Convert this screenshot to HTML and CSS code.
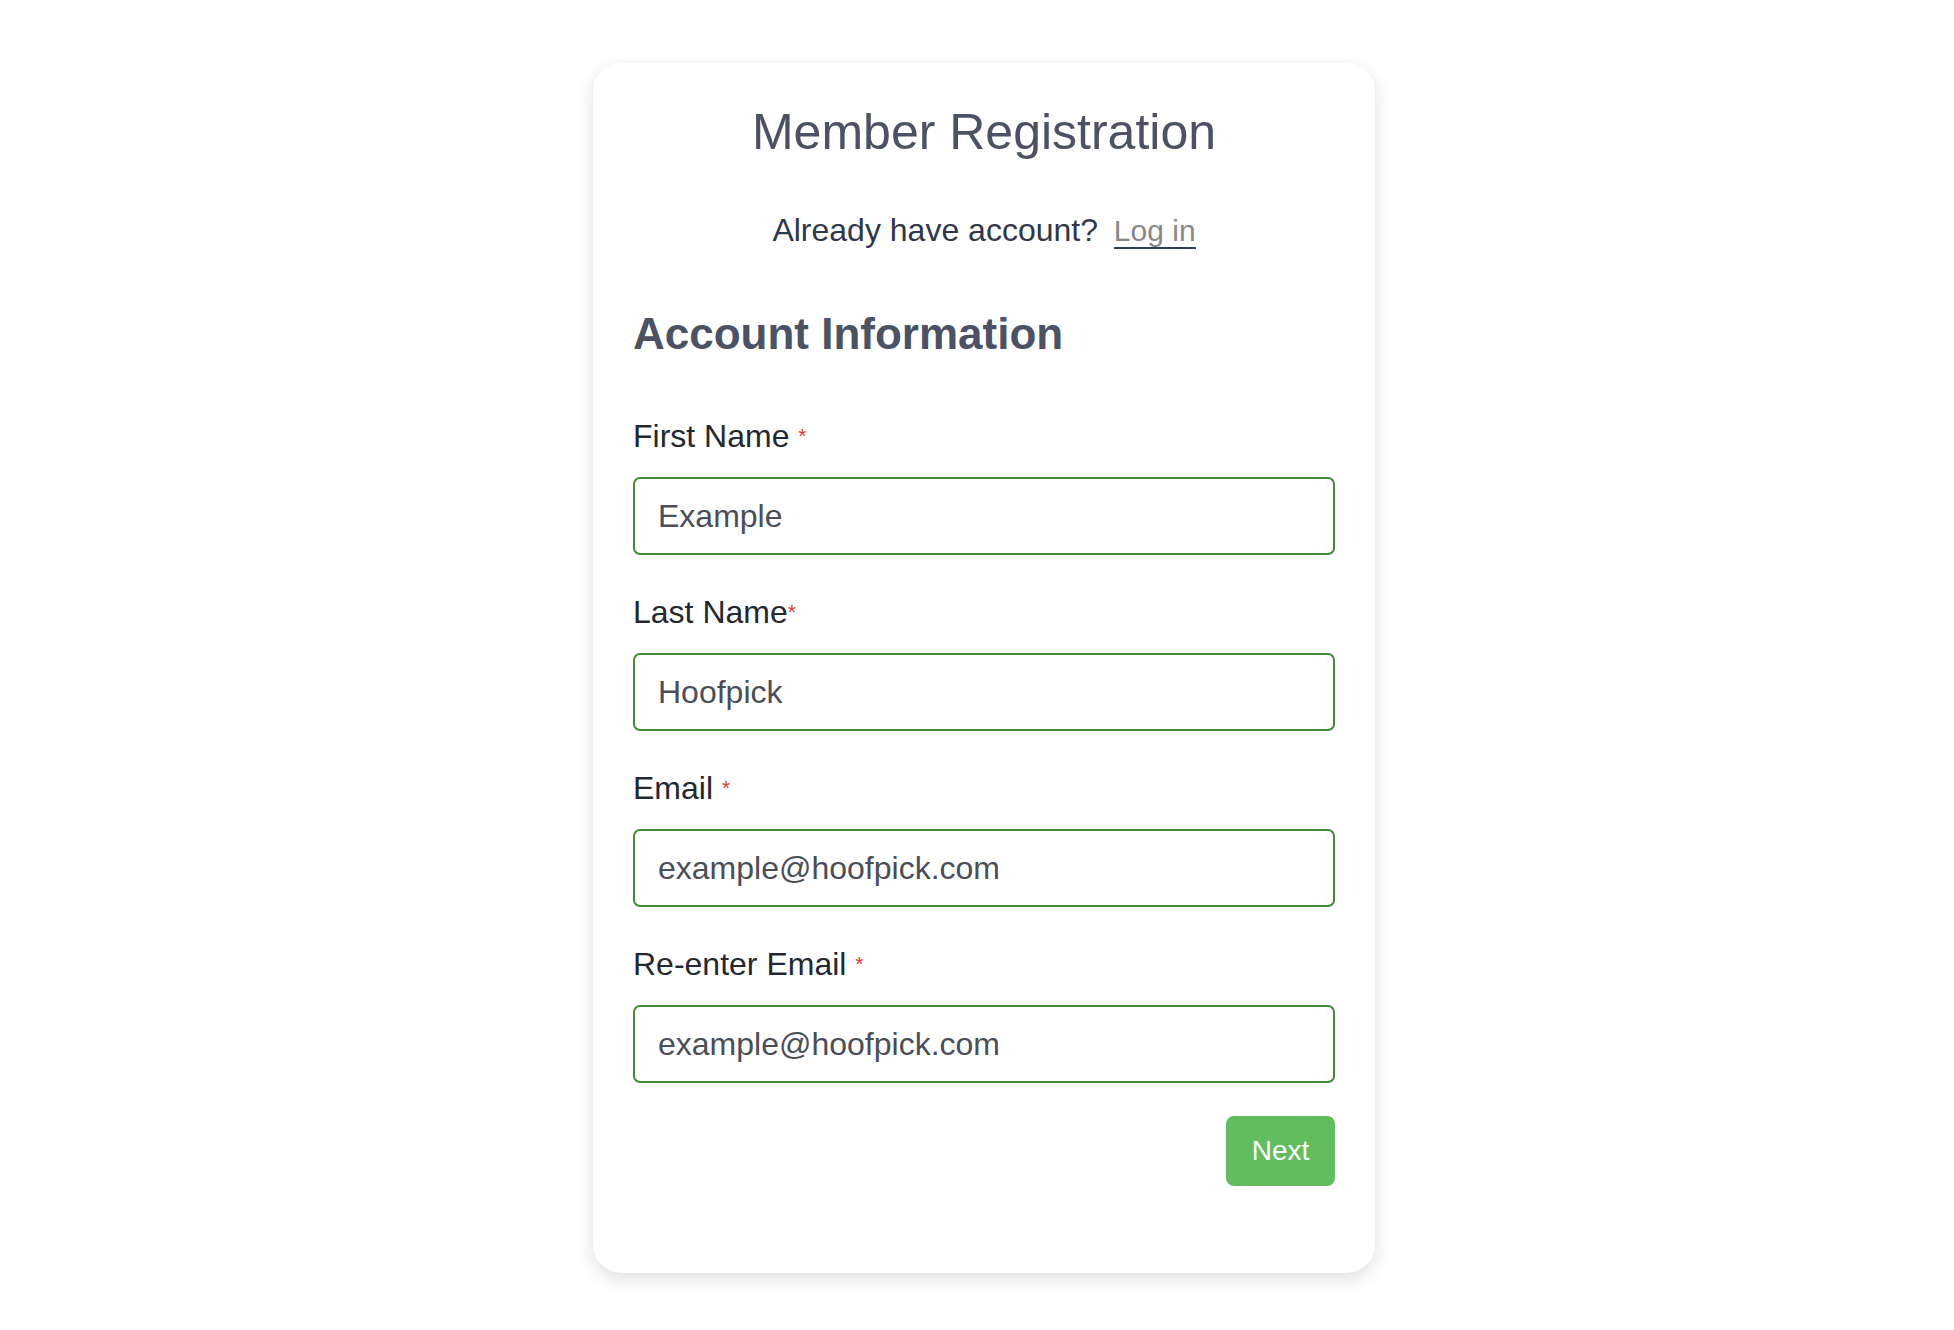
FILE: index.html
```html
<!DOCTYPE html>
<html lang="en">
<head>
  <meta charset="UTF-8">
  <meta name="viewport" content="width=device-width, initial-scale=1.0">
  <title>Member Registration</title>
  <link rel="stylesheet" href="styles.css">
</head>
<body>
  <div class="page">
    <div class="card">
      <h1>Member Registration</h1>
      <p class="login-line">Already have account? <a href="#" class="login-link">Log in</a></p>
      <h2>Account Information</h2>
      <form class="reg-form" onsubmit="return false;">
        <div class="field">
          <label for="firstName">First Name <span class="req">*</span></label>
          <input type="text" id="firstName" placeholder="Example">
        </div>
        <div class="field">
          <label for="lastName">Last Name<span class="req">*</span></label>
          <input type="text" id="lastName" placeholder="Hoofpick">
        </div>
        <div class="field">
          <label for="email">Email <span class="req">*</span></label>
          <input type="email" id="email" placeholder="example@hoofpick.com">
        </div>
        <div class="field">
          <label for="email2">Re-enter Email <span class="req">*</span></label>
          <input type="email" id="email2" placeholder="example@hoofpick.com">
        </div>
        <div class="actions">
          <button type="submit">Next</button>
        </div>
      </form>
    </div>
  </div>
</body>
</html>
```

FILE: styles.css
```css
body {
  font-family: "Liberation Sans", Arial, Helvetica, sans-serif;
  background-color: #fff;
  margin: 0;
  padding: 0;
}
.page {
  display: flex;
  justify-content: center;
  padding: 63px 0 57px 14px;
}
.card {
  box-sizing: border-box;
  width: 782px;
  padding: 40px 40px 87px;
  background-color: #fff;
  border-radius: 28px;
  box-shadow: 0 6px 18px rgba(0, 0, 0, 0.13);
}
h1 {
  margin: 0;
  font-size: 50px;
  line-height: 58px;
  font-weight: normal;
  color: #4b5263;
  text-align: center;
}
.login-line {
  margin: 50px 0 0;
  height: 38px;
  font-size: 32px;
  line-height: 38px;
  color: #2e3848;
  text-align: center;
}
.login-link {
  margin-left: 7px;
  font-size: 30px;
  line-height: 1;
  color: #888;
  text-decoration: none;
  border-bottom: 2px solid #2f3e50;
}
h2 {
  margin: 60px 0 0;
  font-size: 44px;
  line-height: 50px;
  font-weight: bold;
  color: #4b5263;
}
.reg-form {
  margin-top: 59px;
  display: flex;
  flex-direction: column;
  gap: 39px;
}
.field {
  display: flex;
  flex-direction: column;
  gap: 23px;
}
.field label {
  font-size: 32px;
  line-height: 36px;
  color: #24282f;
}
.req {
  color: #e5372d;
  font-size: 21px;
  vertical-align: top;
}
.field input {
  box-sizing: border-box;
  width: 100%;
  height: 78px;
  padding: 0 23px;
  font-family: inherit;
  font-size: 32px;
  color: #4a4e57;
  border: 2px solid #3d8f30;
  border-radius: 7px;
  outline: none;
}
.field input::placeholder {
  color: #4a4e57;
  opacity: 1;
}
.actions {
  display: flex;
  justify-content: flex-end;
  margin-top: -6px;
}
.actions button {
  width: 109px;
  height: 70px;
  font-family: inherit;
  font-size: 28px;
  color: #fff;
  background-color: #62bd5e;
  border: none;
  border-radius: 8px;
  cursor: pointer;
}
```
